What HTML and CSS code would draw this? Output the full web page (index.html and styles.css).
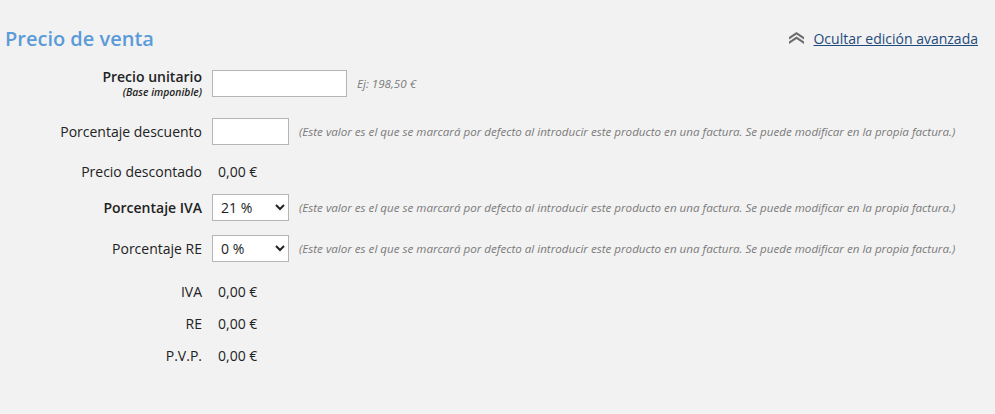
FILE: index.html
```html
<!DOCTYPE html>
<html lang="es">
<head>
<meta charset="utf-8">
<link rel="stylesheet" href="styles.css">
</head>
<body>
<div class="page">
  <div class="header">
    <h2 class="title">Precio de venta</h2>
    <a class="toggle" href="#">
      <svg class="chev" width="15" height="12" viewBox="0 0 15 12"><path d="M7.5 0 L15 5 L15 7.5 L7.5 2.5 L0 7.5 L0 5 Z M7.5 4.5 L15 9.5 L15 12 L7.5 7 L0 12 L0 9.5 Z" fill="#6b6b6b"/></svg>
      <span class="link">Ocultar edición avanzada</span>
    </a>
  </div>

  <div class="row r1">
    <div class="label bold">Precio unitario<span class="sub">(Base imponible)</span></div>
    <input class="inp wide" type="text">
    <span class="hint">Ej: 198,50 €</span>
  </div>

  <div class="row r2">
    <div class="label">Porcentaje descuento</div>
    <input class="inp narrow" type="text">
    <span class="hint">(Este valor es el que se marcará por defecto al introducir este producto en una factura. Se puede modificar en la propia factura.)</span>
  </div>

  <div class="row r3">
    <div class="label">Precio descontado</div>
    <span class="value">0,00 €</span>
  </div>

  <div class="row r4">
    <div class="label bold">Porcentaje IVA</div>
    <select class="sel"><option>21 %</option></select>
    <span class="hint">(Este valor es el que se marcará por defecto al introducir este producto en una factura. Se puede modificar en la propia factura.)</span>
  </div>

  <div class="row r5">
    <div class="label">Porcentaje RE</div>
    <select class="sel"><option>0 %</option></select>
    <span class="hint">(Este valor es el que se marcará por defecto al introducir este producto en una factura. Se puede modificar en la propia factura.)</span>
  </div>

  <div class="row r6">
    <div class="label">IVA</div>
    <span class="value">0,00 €</span>
  </div>
  <div class="row r7">
    <div class="label">RE</div>
    <span class="value">0,00 €</span>
  </div>
  <div class="row r8">
    <div class="label">P.V.P.</div>
    <span class="value">0,00 €</span>
  </div>
</div>
</body>
</html>
```

FILE: styles.css
```css
html, body {
  margin: 0;
  padding: 0;
  background: #f2f2f2;
}
body {
  font-family: "Open Sans", "DejaVu Sans", sans-serif;
  color: #222;
  font-size: 14px;
}
.page {
  padding: 0 17px 0 5px;
}
.header {
  display: flex;
  justify-content: space-between;
  align-items: center;
  height: 38px;
  margin-top: 19px;
}
.title {
  margin: 0;
  font-size: 20px;
  font-weight: 600;
  color: #5b9bd8;
}
.toggle {
  display: flex;
  align-items: center;
  gap: 9px;
  text-decoration: none;
}
.link {
  color: #1f4a7c;
  text-decoration: underline;
  font-size: 14px;
}
.row {
  display: flex;
  align-items: center;
}
.label {
  width: 197px;
  text-align: right;
  margin-right: 10px;
  line-height: 18px;
}
.bold {
  font-weight: 600;
}
.sub {
  display: block;
  font-size: 10.4px;
  font-style: italic;
  font-weight: 600;
  line-height: 13px;
}
.inp {
  box-sizing: border-box;
  height: 27px;
  border: 1px solid #b5b5b5;
  background: #fff;
  margin: 0;
  padding: 0 4px;
}
.wide { width: 135px; }
.narrow { width: 77px; }
.sel {
  box-sizing: border-box;
  width: 77px;
  height: 27px;
  border: 1px solid #b5b5b5;
  background: #fff;
  font-family: "Open Sans", sans-serif;
  font-size: 14px;
  color: #222;
  padding: 0 2px 0 4px;
  margin: 0;
}
.hint {
  margin-left: 10px;
  font-size: 11.6px;
  font-style: italic;
  color: #7a7a7a;
}
.value {
  padding-left: 6px;
}
.r1 { margin-top: 11px; }
.r2 { margin-top: 19px; }
.r3 { margin-top: 17px; }
.r4 { margin-top: 13px; }
.r5 { margin-top: 14px; }
.r6 { margin-top: 20px; }
.r7 { margin-top: 13px; }
.r8 { margin-top: 13px; }
```
